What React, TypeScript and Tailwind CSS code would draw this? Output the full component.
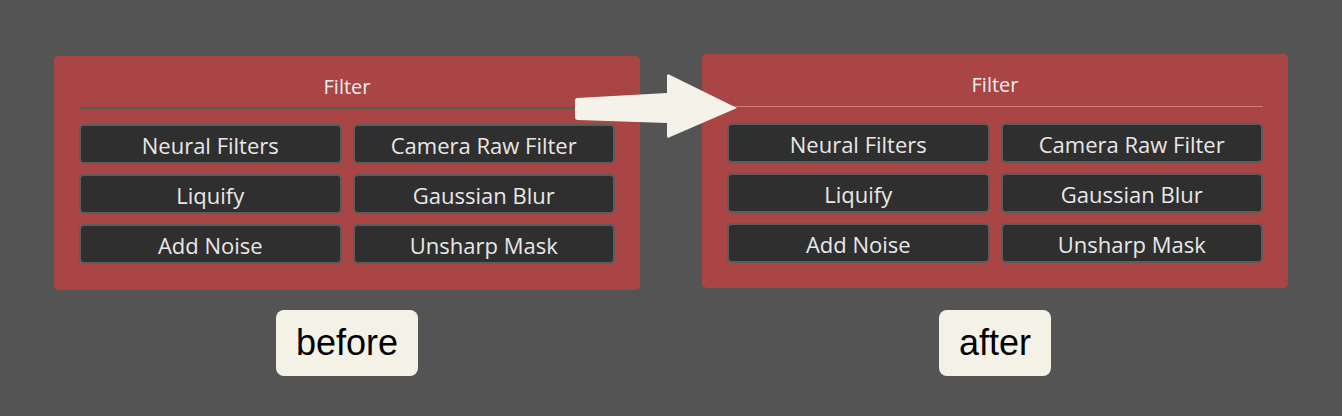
const filters = [
  "Neural Filters",
  "Camera Raw Filter",
  "Liquify",
  "Gaussian Blur",
  "Add Noise",
  "Unsharp Mask",
];

function Panel({ after }: { after?: boolean }) {
  return (
    <div
      className={
        after
          ? "w-[586px] rounded-[5px] bg-[#a94545] px-[25px] pb-[25px] pt-[18px]"
          : "w-[586px] rounded-[5px] bg-[#a94545] px-[25px] pb-[26px] pt-[18px]"
      }
    >
      <div className="text-center text-[20px] leading-[26px] text-[#eeeeee]">Filter</div>
      <div
        className={
          after
            ? "mt-[8px] mb-[16px] h-px bg-[#d27a7a]"
            : "mt-[7px] mb-[15px] h-[2px] bg-[#585858]"
        }
      />
      <div className="grid grid-cols-2 gap-x-[11px] gap-y-[10px]">
        {filters.map((f) => (
          <button
            key={f}
            className="flex h-[40px] items-center justify-center rounded-[5px] border-2 border-[#5c5c5c] bg-[#2f2f2f] pt-[2px] text-[22px] font-medium leading-none text-[#e8e8e8]"
          >
            {f}
          </button>
        ))}
      </div>
    </div>
  );
}

function Tag({ label }: { label: string }) {
  return (
    <div className="flex h-[66px] items-center rounded-[8px] bg-[#f4f2e6] px-[20px] font-['Liberation_Sans',Arial,sans-serif] text-[36px] text-black">
      {label}
    </div>
  );
}

export default function App() {
  return (
    <div className="relative h-[416px] w-[1342px] bg-[#545454] font-['Open_Sans',sans-serif]">
      <div className="flex gap-[62px] px-[54px] pt-[54px]">
        <div className="mt-[2px] flex flex-col items-center gap-[20px]">
          <Panel />
          <Tag label="before" />
        </div>
        <div className="flex flex-col items-center gap-[22px]">
          <Panel after />
          <Tag label="after" />
        </div>
      </div>
      <svg
        className="absolute left-[570px] top-[70px]"
        width="172"
        height="72"
        viewBox="0 0 172 72"
        aria-hidden="true"
      >
        <path
          d="M7 28 Q5 28 5 31 L5 47 Q5 50 8 50 L97 53 L97 66 Q97 69 100 67 L167 38 L100 5 Q97 3 97 6 L97 23 Z"
          fill="#f5f3e9"
          strokeLinejoin="round"
        />
      </svg>
    </div>
  );
}
